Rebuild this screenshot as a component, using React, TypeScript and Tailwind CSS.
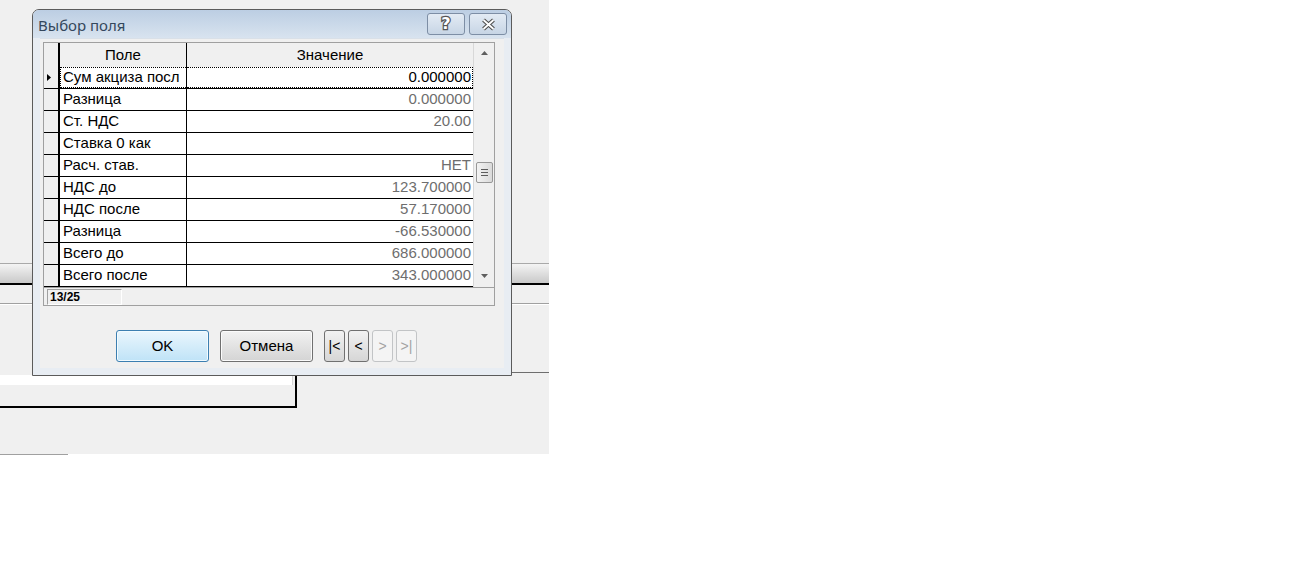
const rows: [string, string][] = [
  ["Сум акциза посл", "0.000000"],
  ["Разница", "0.000000"],
  ["Ст. НДС", "20.00"],
  ["Ставка 0 как", ""],
  ["Расч. став.", "НЕТ"],
  ["НДС до", "123.700000"],
  ["НДС после", "57.170000"],
  ["Разница", "-66.530000"],
  ["Всего до", "686.000000"],
  ["Всего после", "343.000000"],
];

function Arrow({ down }: { down?: boolean }) {
  return (
    <svg width="7" height="4" viewBox="0 0 7 4">
      <polygon
        points={down ? "0,0 7,0 3.5,4" : "0,4 7,4 3.5,0"}
        fill="#5f5f5f"
      />
    </svg>
  );
}

function GridRow({
  name,
  value,
  current,
}: {
  name: string;
  value: string;
  current?: boolean;
}) {
  return (
    <div className="flex h-[22px]">
      <div className="flex w-[16px] items-center border-r-2 border-b border-black bg-[#f0f0f0] pl-[3px]">
        {current && (
          <svg width="4" height="7" viewBox="0 0 4 7">
            <polygon points="0,0 4,3.5 0,7" fill="#000" />
          </svg>
        )}
      </div>
      <div className="w-[127px] border-r border-b border-black bg-white">
        <div
          className={
            current
              ? "flex h-full items-center border-y border-l border-dotted border-black pl-[2px] text-black"
              : "flex h-full items-center pl-[3px] text-black"
          }
        >
          {name}
        </div>
      </div>
      <div className="w-[286px] border-b border-black bg-white">
        <div
          className={
            current
              ? "flex h-full items-center justify-end border-y border-r border-dotted border-black pr-[1px] text-black"
              : "flex h-full items-center justify-end pr-[2px] text-[#6e6e6e]"
          }
        >
          {value}
        </div>
      </div>
    </div>
  );
}

function NavButton({ label, enabled }: { label: string; enabled?: boolean }) {
  return (
    <button
      className={
        enabled
          ? "flex h-[32px] w-[21px] items-center justify-center rounded-[3px] border border-[#707070] bg-gradient-to-b from-[#f2f2f2] to-[#d6d6d6] text-[14px] text-black"
          : "flex h-[32px] w-[21px] items-center justify-center rounded-[3px] border border-[#c2c4c6] bg-[#f4f4f4] text-[14px] text-[#a3a3a3]"
      }
    >
      {label}
    </button>
  );
}

export default function App() {
  return (
    <div className="h-[570px] w-full bg-white font-['Liberation_Sans',Arial,sans-serif] text-[15px]">
      <div className="relative flex h-[454px] w-[549px] flex-col bg-[#f0f0f0]">
        <div className="h-[263px]" />
        <div className="h-[22px] border-t border-b-2 border-t-[#a9a9a9] border-b-black bg-gradient-to-b from-[#f4f4f4] to-[#c9c9c9]" />
        <div className="h-[18px]" />
        <div className="h-[2px] border-t border-b border-t-[#a0a0a0] border-b-white" />
        <div className="h-[67px]" />
        <div className="flex">
          <div className="h-[36px] w-[297px] border-r-2 border-b-2 border-black pt-[3px]">
            <div className="h-[10px] w-[293px] border-r border-[#d4d4d4] bg-white" />
          </div>
          <div className="flex-1 border-t border-[#6e6e6e]" />
        </div>

        {/* dialog window */}
        <div className="absolute top-[9px] left-[32px] flex h-[367px] w-[480px] flex-col rounded-t-[7px] border border-[#5b5b5b] bg-[#e8edf3]">
          <div className="flex h-[28px] justify-between rounded-t-[6px] bg-gradient-to-b from-[#bccee3] to-[#d8e3ef] pr-[4px] pl-[5px]">
            <span className="mt-[4px] font-['Noto_Sans',sans-serif] text-[15px] text-[#34475c]">
              Выбор поля
            </span>
            <div className="mt-[3px] flex gap-[4px]">
              <div className="flex h-[22px] w-[38px] items-center justify-center rounded-[3px] border border-[#7d8ea5] bg-gradient-to-b from-[#e3ebf4] to-[#c7d5e5]">
                <span className="font-['DejaVu_Sans',sans-serif] text-[16px] leading-none font-bold text-white [paint-order:stroke_fill] [-webkit-text-stroke:2.5px_#555]">
                  ?
                </span>
              </div>
              <div className="flex h-[22px] w-[38px] items-center justify-center rounded-[3px] border border-[#7d8ea5] bg-gradient-to-b from-[#e3ebf4] to-[#c7d5e5]">
                <svg width="15" height="13" viewBox="0 0 15 13">
                  <path d="M2.5 2 L12.5 11 M12.5 2 L2.5 11" stroke="#4f4f4f" strokeWidth="4" />
                  <path d="M2.5 2 L12.5 11 M12.5 2 L2.5 11" stroke="#fff" strokeWidth="1.8" />
                </svg>
              </div>
            </div>
          </div>

          <div className="mx-[7px] mb-[7px] flex flex-1 flex-col border-t border-[#d9e0e8] bg-[#f0f0f0]">
            {/* grid */}
            <div className="mt-[3px] ml-[3px] flex h-[264px] w-[452px] flex-col border border-[#a0a0a0] bg-[#f0f0f0]">
              <div className="flex">
                <div>
                  <div className="flex h-[24px] bg-[#f0f0f0]">
                    <div className="w-[16px] border-r-2 border-black" />
                    <div className="flex w-[127px] items-center justify-center border-r border-black">
                      Поле
                    </div>
                    <div className="flex w-[286px] items-center justify-center">
                      Значение
                    </div>
                  </div>
                  {rows.map(([n, v], i) => (
                    <GridRow key={i} name={n} value={v} current={i === 0} />
                  ))}
                </div>
                <div className="flex w-[21px] flex-col items-center border-l border-[#d8d8d8] bg-[#f0f0f0]">
                  <div className="flex h-[17px] items-center justify-center pt-[2px]">
                    <Arrow />
                  </div>
                  <div className="h-[102px]" />
                  <div className="flex h-[21px] w-[17px] flex-col items-center justify-center gap-[2px] rounded-[2px] border border-[#979797] bg-gradient-to-r from-[#f3f3f3] to-[#dadada]">
                    <div className="h-px w-[7px] bg-[#5c5c5c]" />
                    <div className="h-px w-[7px] bg-[#5c5c5c]" />
                    <div className="h-px w-[7px] bg-[#5c5c5c]" />
                  </div>
                  <div className="flex-1" />
                  <div className="flex h-[20px] items-center justify-center pb-[2px]">
                    <Arrow down />
                  </div>
                </div>
              </div>
              <div className="flex-1 border-t border-[#a0a0a0] pt-[1px] pl-[3px]">
                <div className="flex h-[16px] w-[75px] items-center border-t border-l border-t-[#a0a0a0] border-l-[#a0a0a0] border-r border-b border-r-white border-b-white pl-[2px] text-[12px] font-bold text-black">
                  13/25
                </div>
              </div>
            </div>

            {/* buttons */}
            <div className="mt-[24px] flex pl-[76px]">
              <button className="flex h-[32px] w-[93px] items-center justify-center rounded-[3px] border border-[#3c7fb1] bg-gradient-to-b from-[#eaf6fd] to-[#bfe3f7] text-black shadow-[inset_0_0_0_1px_#f2fbff]">
                OK
              </button>
              <button className="ml-[11px] flex h-[32px] w-[93px] items-center justify-center rounded-[3px] border border-[#707070] bg-gradient-to-b from-[#f2f2f2] to-[#d4d4d4] text-black shadow-[inset_0_0_0_1px_#fbfbfb]">
                Отмена
              </button>
              <div className="ml-[11px] flex gap-[3px]">
                <NavButton label="|<" enabled />
                <NavButton label="<" enabled />
                <NavButton label=">" />
                <NavButton label=">|" />
              </div>
            </div>
          </div>
        </div>
      </div>
      <div className="h-px w-[68px] bg-[#a0a0a0]" />
    </div>
  );
}
